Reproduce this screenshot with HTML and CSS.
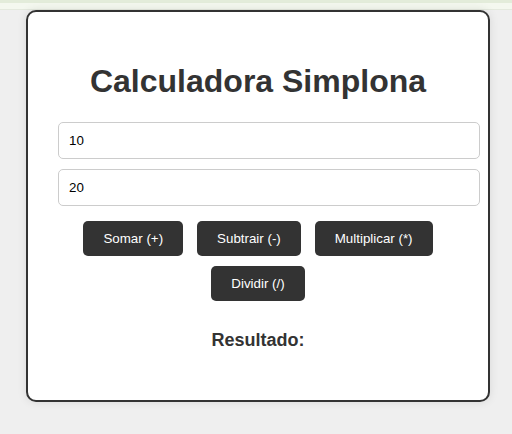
FILE: index.html
```html
<!DOCTYPE html>
<html lang="pt">
<head>
<meta charset="utf-8">
<title>Calculadora Simplona</title>
<link rel="stylesheet" href="styles.css">
</head>
<body>
<div class="topbar"><div class="topbar-dark"></div></div>
<div class="page">
  <div class="card">
    <h1 class="title">Calculadora Simplona</h1>
    <input class="field" type="text" value="10">
    <input class="field" type="text" value="20">
    <div class="buttons">
      <button class="btn">Somar (+)</button>
      <button class="btn">Subtrair (-)</button>
      <button class="btn">Multiplicar (*)</button>
      <button class="btn">Dividir (/)</button>
    </div>
    <h3 class="result">Resultado:</h3>
  </div>
</div>
</body>
</html>
```
FILE: styles.css
```css
* { box-sizing: content-box; }
html, body { margin: 0; padding: 0; }
body {
  background: #efefef;
  font-family: "Liberation Sans", Arial, sans-serif;
  color: #333;
  height: 434px;
  overflow: hidden;
}
.topbar {
  height: 9px;
  background: #f4f8ef;
  border-bottom: 1px solid #e4e9de;
}
.topbar-dark {
  height: 3px;
  background: #e3ecda;
}
.page {
  padding-left: 26px;
}
.card {
  width: 400px;
  padding: 30px;
  border: 2px solid #333;
  border-radius: 10px;
  background: #fff;
  box-shadow: 0 0 10px rgba(0, 0, 0, 0.1);
  display: flex;
  flex-direction: column;
  align-items: stretch;
}
.title {
  font-size: 32px;
  font-weight: bold;
  text-align: center;
  margin: 21px 0 22px;
  line-height: 37px;
}
.field {
  display: block;
  width: 100%;
  padding: 10px;
  margin: 0 0 10px;
  border: 1px solid #ccc;
  border-radius: 5px;
  font-family: "Liberation Sans", Arial, sans-serif;
  font-size: 13.33px;
  line-height: 15px;
  color: #000;
  background: #fff;
}
.buttons {
  display: flex;
  flex-wrap: wrap;
  justify-content: center;
  gap: 10px 14px;
  margin-top: 5px;
}
.btn {
  background: #333;
  color: #fff;
  border: none;
  border-radius: 5px;
  padding: 10px 20px;
  font-family: "Liberation Sans", Arial, sans-serif;
  font-size: 13.33px;
  line-height: 15px;
}
.result {
  font-size: 18px;
  font-weight: bold;
  text-align: center;
  margin: 28px 0 19px;
  line-height: 22px;
}
```
